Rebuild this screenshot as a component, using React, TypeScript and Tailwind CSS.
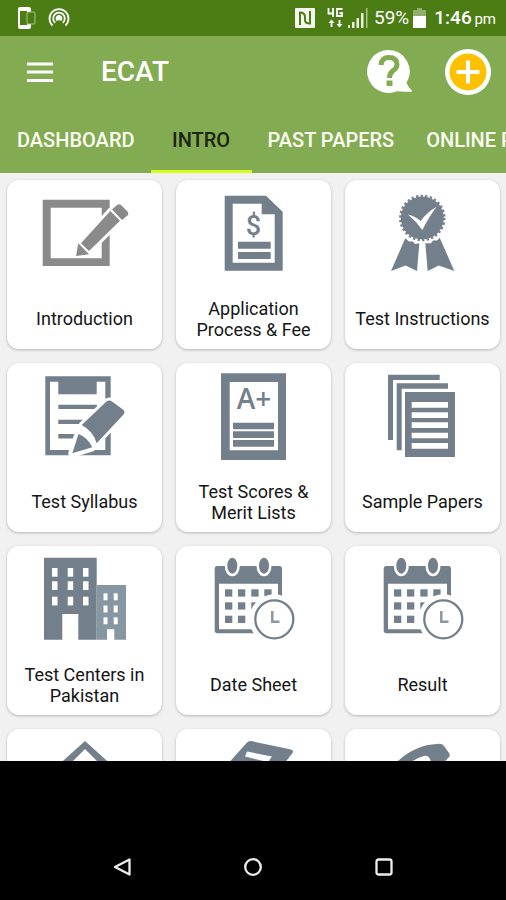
import type { ReactNode } from "react";

const slate = "#73808c";

function IntroductionIcon() {
  return (
    <>
      <path fill="#8a8a8a" fillRule="evenodd" d="M35.7 19.7H102.7V86H35.7ZM43.7 27.7V78.3H94.7V27.7Z" />
      <g fill="#8a8a8a" stroke="#fff" strokeWidth="6" paintOrder="stroke" strokeLinejoin="round">
        <path d="M74 63.3 103.3 31 113 40.7 82 71Z" />
        <path d="M71.3 63.3 82 74.3 69 76Z" strokeWidth="3" />
        <path d="M105 29.6 110 25Q112 23.4 114 25L120.500 31.500Q122 33.500 120.500 35.500L115 40Z" strokeWidth="3" />
      </g>
    </>
  );
}

function FeeIcon() {
  return (
    <>
      <path
        fillRule="evenodd"
        d="M48.700 15.700H90L106.700 31.700V90.700H48.700ZM56.700 23.700V82.700H98.700V34.300H85.700V23.700Z"
      />
      <path d="M62 61.700H94.700V68.700H62ZM62 72H94.700V79H62Z" />
      <text x="77.500" y="54.500" fontSize="27" fontWeight="500" textAnchor="middle">$</text>
    </>
  );
}

function MedalIcon() {
  return (
    <>
      <circle cx="77.300" cy="38" r="21.500" />
      <circle cx="77.300" cy="38" r="21.500" fill="none" stroke={slate} strokeWidth="3.500" strokeDasharray="2.250 2.250" />
      <path
        fill="#fff"
        d="M63 34.500Q70 36 75.700 41Q82 32 91.500 27Q85 35 77.300 50Q71 41 63 34.500Z"
      />
      <path d="M60.300 58.300 64 61.500 68 61.500 70 64 74.300 63.300 72 91 60.500 85.500 46 91Z" />
      <path d="M80.300 63.300 86 63.300 88 60.500 92 60.500 94.700 57.700 109.300 91 93.700 85.500 82.700 91Z" />
    </>
  );
}

function SyllabusIcon() {
  return (
    <>
      <path
        fillRule="evenodd"
        d="M38.300 13.300H103.700V92.300H38.300ZM43 18.700V87H98.300V18.700H89.700V31.300H51.300V18.700Z"
      />
      <path d="M51.300 41.700H90V46H51.300ZM51.300 56.700H80V61H51.300ZM51.300 71H70V75.500H51.300Z" />
      <g stroke="#fff" strokeWidth="8" paintOrder="stroke" strokeLinejoin="round">
        <path d="M71.500 71Q80 74 85.300 84.300L65.300 90.300Z" />
        <path d="M74.700 62 99 39Q102 36.500 105 38.500L116 46.500Q118.500 49 116.500 51.500L89.700 80.300Q86 68 74.700 62Z" strokeWidth="6" />
      </g>
    </>
  );
}

function ScoresIcon() {
  return (
    <>
      <path fillRule="evenodd" d="M45 10.300H110V97H45ZM53.700 19V87.300H102V19Z" />
      <path d="M57 59.700H98V66.300H57ZM57 68.300H98V75H57ZM57 77H98V83.700H57Z" />
      <text x="78" y="46" fontSize="28" fontWeight="600" fontFamily="Open Sans" textAnchor="middle">A+</text>
    </>
  );
}

function PapersIcon() {
  return (
    <>
      <path d="M43 11.700H94.700V17H48V77H43Z" />
      <path d="M51.700 20.300H103V25.700H56.700V87.300H51.700Z" />
      <path
        fillRule="evenodd"
        d="M60 29H110V94H60ZM66.700 39V44.700H103V39ZM66.700 49.300V55H103V49.300ZM66.700 59.300V65H103V59.300ZM66.700 69.700V75.300H103V69.700ZM66.700 80V85.700H103V80Z"
      />
    </>
  );
}

function BuildingsIcon() {
  return (
    <>
      <path d="M37 11.700H89.700V93.700H71.300V68H55.300V93.700H37Z" />
      <path fill="#8796a3" d="M89.700 39H119V93.700H107.300V83.300H100V93.700H89.700Z" />
      <g fill="#fff">
        {[22, 35.3, 50.7].map((y) =>
          [45, 60.7, 76].map((x) => <rect key={`${x}-${y}`} x={x} y={y} width="5.500" height="8.700" />),
        )}
        {[47.3, 59.5, 71.3].map((y) =>
          [96.5, 106.7].map((x) => <rect key={`${x}-${y}`} x={x} y={y} width="4" height="7" />),
        )}
      </g>
    </>
  );
}

function CalendarIcon() {
  return (
    <>
      <path
        fillRule="evenodd"
        d="M41 20H104Q106 20 106 22.500V87.300H41.500Q38.700 87.300 38.700 84.500V22.500Q38.700 20 41 20ZM43 37.700V83.300H102V37.700Z"
      />
      {[43.3, 56.3, 69.7].map((y) =>
        [49, 62, 75.3, 88.3].map((x) => <rect key={`${x}-${y}`} x={x} y={y} width="7.300" height="7.300" />),
      )}
      <g stroke="#fff" strokeWidth="5" paintOrder="stroke">
        <ellipse cx="56.300" cy="19.700" rx="5" ry="8" />
        <ellipse cx="88" cy="19.700" rx="5" ry="8" />
      </g>
      <circle cx="98.300" cy="73.300" r="25" fill="#fff" />
      <circle cx="98.300" cy="73.300" r="19" fill="#fff" stroke={slate} strokeWidth="2.300" />
      <path d="M96.300 65V75.700H103.500" fill="none" stroke="#8d979f" strokeWidth="2.500" />
    </>
  );
}

function HouseIcon() {
  return <path d="M47 40 78 12 109 40 102 44 78 20 54 44Z" />;
}

function NewsIcon() {
  return (
    <path
      fillRule="evenodd"
      d="M75 12 115 20.500Q118 21.500 116.500 24L95 52 40 48 71 13.500Q73 11.500 75 12ZM71 22.500 69 27.500 92 33 96 27.500Z"
    />
  );
}

function PhoneIcon() {
  return (
    <path d="M45 40Q66 16 92 15Q97 14 99 17L104 24Q106 27 103 29L95 38Q90 42 87 36L85 30Q83 26 79 27Q66 30 56 44Z" />
  );
}

const topics: { label: string; icon: ReactNode }[] = [
  { label: "Introduction", icon: <IntroductionIcon /> },
  { label: "Application Process & Fee", icon: <FeeIcon /> },
  { label: "Test Instructions", icon: <MedalIcon /> },
  { label: "Test Syllabus", icon: <SyllabusIcon /> },
  { label: "Test Scores & Merit Lists", icon: <ScoresIcon /> },
  { label: "Sample Papers", icon: <PapersIcon /> },
  { label: "Test Centers in Pakistan", icon: <BuildingsIcon /> },
  { label: "Date Sheet", icon: <CalendarIcon /> },
  { label: "Result", icon: <CalendarIcon /> },
  { label: "Home", icon: <HouseIcon /> },
  { label: "News", icon: <NewsIcon /> },
  { label: "Contact", icon: <PhoneIcon /> },
];

const tabs = ["DASHBOARD", "INTRO", "PAST PAPERS", "ONLINE PREP"];

function TopicCard({ label, icon }: { label: string; icon: ReactNode }) {
  return (
    <button
      type="button"
      className="flex h-[169px] flex-col items-center rounded-xl bg-white shadow-[0_1px_3px_rgba(0,0,0,0.25)]"
    >
      <svg aria-hidden="true" viewBox="25 0 105 100" width="105" height="100" fill={slate} className="shrink-0">
        {icon}
      </svg>
      <span className="mt-2 flex min-h-0 flex-1 items-center justify-center">
        <span className="max-w-[140px] text-lg leading-[21px] text-[#151515]">{label}</span>
      </span>
    </button>
  );
}

function StatusBar() {
  return (
    <div className="flex h-9 shrink-0 items-center bg-[#4b7d14] pr-[10px] pl-[17px] text-white">
      <svg viewBox="0 0 19 24" width="19" height="24" fill="none">
        <path fill="#fff" fillRule="evenodd" d="M3 1H12Q14 1 14 3V21Q14 23 12 23H3Q1 23 1 21V3Q1 1 3 1ZM3 5V19H10V5Z" />
        <rect x="10" y="6" width="8" height="12" rx="1" fill="#4b7d14" stroke="#a9c38c" />
      </svg>
      <svg viewBox="0 0 22 22" width="22" height="22" fill="none" stroke="#fff" strokeWidth="1.800" className="ml-3">
        <path d="M4.500 18.500A9.500 9.500 0 1 1 17.500 18.500" />
        <path d="M7.200 15.800A5.800 5.800 0 1 1 14.800 15.800" />
        <path d="M9.500 13.500A2.500 2.500 0 1 1 12.500 13.500" />
        <circle cx="11" cy="11.500" r="1" fill="#fff" />
      </svg>
      <svg viewBox="0 0 20 20" width="20" height="20" className="ml-auto">
        <rect width="20" height="20" rx="1" fill="#f4f8ef" />
        <path d="M5 17V4.500Q10 4.500 10 9V12Q10 15.500 15 15.500V3" fill="none" stroke="#4b7d14" strokeWidth="2" />
      </svg>
      <svg viewBox="0 0 17 20" width="17" height="20" fill="none" stroke="#fff" strokeWidth="1.800" className="ml-3">
        <path d="M1.500 0V5.500H7M6 0V9M15.500 1H10V8H15V5H12.500" />
        <path d="M4.500 19V13.500M12.500 12V17.500" />
        <path fill="#fff" stroke="none" d="M1.500 15 4.500 11.500 7.500 15ZM9.500 16 12.500 19.500 15.500 16Z" />
      </svg>
      <svg viewBox="0 0 20 20" width="20" height="20" fill="#e9f1df" className="ml-1">
        <path d="M0 17H2V20H0ZM4 14H6.500V20H4ZM8.500 10H11V20H8.500ZM13 5H15.500V20H13Z" />
        <path fill="#a9c38c" d="M18 0H19.500V20H18Z" />
      </svg>
      <span className="ml-1.5 text-[19px] leading-6">59%</span>
      <svg viewBox="0 0 13 20" width="13" height="20" className="ml-1">
        <path fill="#8fae6c" d="M4 0H9V2H13V9H0V2H4Z" />
        <path fill="#fff" d="M0 8H13V20H0Z" />
      </svg>
      <span className="ml-2 text-[19px] leading-6 font-medium">
        1:46 <span className="-ml-0.5 text-[15px] font-normal">pm</span>
      </span>
    </div>
  );
}

export default function App() {
  return (
    <div className="flex h-screen flex-col overflow-hidden bg-[#f1f1f1] font-['Roboto',sans-serif]">
      <StatusBar />
      <header className="shrink-0 bg-[#83ab52] text-white">
        <div className="flex h-[71px] items-center pr-[15px] pl-[27px]">
          <button type="button" aria-label="Open menu">
            <svg viewBox="0 0 26 20" width="26" height="20" stroke="#fff" strokeWidth="3" className="block">
              <path d="M0 2H26M0 10H26M0 18.500H26" />
            </svg>
          </button>
          <h1 className="ml-12 text-[28px] leading-9 font-medium">ECAT</h1>
          <button type="button" aria-label="Help" className="ml-auto">
            <svg viewBox="0 0 46 46" width="46" height="46" className="block">
              <path fill="#fff" d="M21.500 1A21.500 21.500 0 1 0 30 42.300Q37 43 45.500 42.500 41 38 39.500 33.800A21.500 21.500 0 0 0 21.500 1Z" />
              <path
                d="M14 16Q14.500 8.500 22 8.500 30 8.500 30 15.500 30 19 26 21.800 22.500 24.500 22.500 29"
                fill="none"
                stroke="#83ab52"
                strokeWidth="5"
              />
              <rect x="19.500" y="31.500" width="6" height="5.500" fill="#83ab52" />
            </svg>
          </button>
          <button type="button" aria-label="Add" className="ml-8">
            <svg viewBox="0 0 46 46" width="46" height="46" className="block">
              <circle cx="23" cy="23" r="23" fill="#fff" />
              <circle cx="23" cy="23" r="18.500" fill="#fdc101" />
              <path d="M23 11.500V34.500M11.500 23H34.500" stroke="#fff" strokeWidth="4" />
            </svg>
          </button>
        </div>
        <nav className="flex h-[66px] overflow-hidden pl-px" role="tablist">
          {tabs.map((tab) => {
            const active = tab === "INTRO";
            return (
              <button
                key={tab}
                type="button"
                role="tab"
                aria-selected={active}
                className={`min-w-[101px] shrink-0 border-y-[3px] border-t-transparent px-4 text-xl font-medium whitespace-nowrap ${
                  active ? "border-b-[#d6fb1c] text-[#1c2412]" : "border-b-transparent text-[#fbfdf2]"
                }`}
              >
                {tab}
              </button>
            );
          })}
        </nav>
      </header>
      <main className="min-h-0 flex-1 overflow-hidden pt-[7px] pr-1.5 pl-[7px]">
        <div className="grid grid-cols-3 gap-3.5">
          {topics.map((topic) => (
            <TopicCard key={topic.label} label={topic.label} icon={topic.icon} />
          ))}
        </div>
      </main>
      <footer className="flex h-[139px] shrink-0 items-end bg-black">
        <nav className="flex h-[66px] w-full items-center justify-between px-28">
          <button type="button" aria-label="Back">
            <svg viewBox="0 0 20 20" width="20" height="20" fill="none" stroke="#eee" strokeWidth="2.300" strokeLinejoin="round" className="block">
              <path d="M17.500 2.500V17.500L3 10Z" />
            </svg>
          </button>
          <button type="button" aria-label="Home screen">
            <svg viewBox="0 0 20 20" width="20" height="20" fill="none" stroke="#eee" strokeWidth="2.300" className="block">
              <circle cx="10" cy="10" r="7.800" />
            </svg>
          </button>
          <button type="button" aria-label="Recent apps">
            <svg viewBox="0 0 20 20" width="20" height="20" fill="none" stroke="#eee" strokeWidth="2.300" className="block">
              <rect x="2.500" y="2.500" width="15" height="15" rx="2" />
            </svg>
          </button>
        </nav>
      </footer>
    </div>
  );
}
